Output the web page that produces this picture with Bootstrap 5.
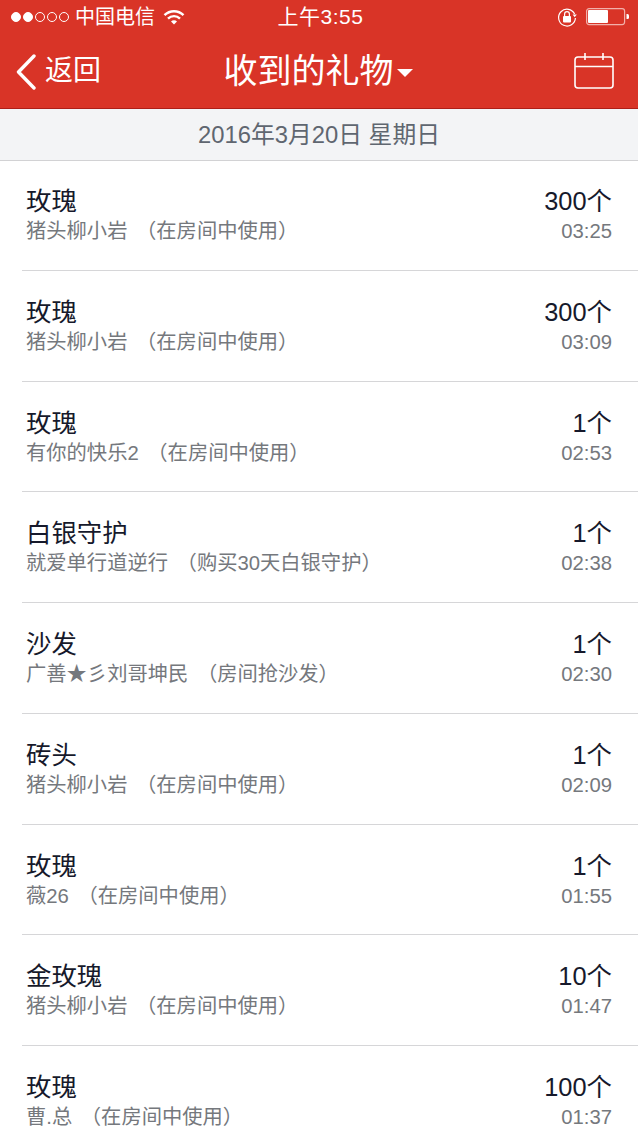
<!DOCTYPE html>
<html lang="zh-CN">
<head>
    <meta charset="UTF-8">
    <meta name="viewport" content="width=device-width, initial-scale=1.0">
    <title>收到的礼物</title>
    <link rel="stylesheet" href="https://cdn.jsdelivr.net/npm/bootstrap@5.3.0/dist/css/bootstrap.min.css">
    <style>
        body {
            background-color: #fff;
            font-family: "Liberation Sans", "Noto Sans CJK SC", sans-serif;
            overflow: hidden;
        }
        .app-head {
            background-color: #d93427;
            color: #fff;
            border-bottom: 1px solid #ad1f18;
            height: 109px;
        }
        .status-line {
            height: 34px;
            padding: 0 8px 0 11px;
            font-size: 20px;
        }
        .status-side {
            width: 200px;
        }
        .signal-dot {
            width: 10px;
            height: 10px;
            border: 1px solid #fff;
            border-radius: 50%;
            margin-right: 2px;
        }
        .signal-dot.on {
            background-color: #fff;
        }
        .status-clock {
            font-size: 21px;
            letter-spacing: .5px;
        }
        .title-line {
            height: 74px;
            padding: 0 24px 0 16px;
        }
        .title-left {
            width: 126px;
        }
        .title-right {
            width: 120px;
        }
        .back-text {
            font-size: 28px;
            line-height: 1;
        }
        .page-title {
            font-size: 34px;
            line-height: 1;
        }
        .title-arrow {
            border-left: 8px solid transparent;
            border-right: 8px solid transparent;
            border-top: 8px solid #fff;
            margin-left: 3px;
            margin-top: 3px;
        }
        .date-strip {
            height: 52px;
            margin-bottom: -1px;
            background-color: #f3f4f6;
            border-bottom: 1px solid #d2d2d4;
            color: #5f6670;
            font-size: 23.8px;
        }
        .gift-row {
            height: 110.75px;
            margin-left: 22px;
            padding: 23px 26px 0 4px;
            border-bottom: 1px solid #d6d6d8;
        }
        .gift-name, .gift-count {
            font-size: 25.4px;
            line-height: 36px;
            color: #16192b;
        }
        .gift-from {
            font-size: 20.3px;
            line-height: 25px;
            word-spacing: 3px;
            color: #75787d;
        }
        .gift-time {
            font-size: 20.3px;
            line-height: 25px;
            color: #75787d;
        }
    </style>
</head>
<body>

    <!-- Red header -->
    <div class="app-head">
        <div class="status-line d-flex align-items-center justify-content-between">
            <div class="status-side d-flex align-items-center">
                <span class="signal-dot on"></span><span class="signal-dot on"></span><span class="signal-dot"></span><span class="signal-dot"></span><span class="signal-dot"></span>
                <span class="ms-1">中国电信</span>
                <svg class="ms-2" width="22" height="16" viewBox="0 0 22 16" fill="none" stroke="#fff" stroke-width="2.4">
                    <path d="M1.5 6.2a13.5 13.5 0 0 1 19 0"/>
                    <path d="M5 9.6a8.6 8.6 0 0 1 12 0"/>
                    <path d="M11 15.5l-3-3a4.2 4.2 0 0 1 6 0z" fill="#fff" stroke="none"/>
                </svg>
            </div>
            <div class="status-clock">上午3:55</div>
            <div class="status-side d-flex align-items-center justify-content-end">
                <svg width="22" height="22" viewBox="0 0 22 22" fill="none" stroke="#fff" stroke-width="1.2">
                    <path d="M18.6 8A8.4 8.4 0 1 0 19.4 12"/>
                    <path d="M16.6 8.6h4.2l-2.1 2.6z" fill="#fff" stroke="none"/>
                    <rect x="7" y="10" width="8" height="6.5" rx="1" fill="#fff" stroke="none"/>
                    <path d="M8.6 10V8a2.4 2.4 0 0 1 4.8 0v2"/>
                </svg>
                <svg class="ms-2" width="44" height="18" viewBox="0 0 44 18">
                    <rect x=".6" y=".6" width="38" height="16" rx="2.5" fill="none" stroke="#f2b0aa" stroke-width="1.2"/>
                    <rect x="2" y="2" width="20" height="13" rx="1" fill="#fff"/>
                    <path d="M40.5 6h1a1.5 1.5 0 0 1 1.5 1.5v2a1.5 1.5 0 0 1-1.5 1.5h-1z" fill="#fff"/>
                </svg>
            </div>
        </div>
        <div class="title-line d-flex align-items-center justify-content-between">
            <div class="title-left d-flex align-items-center">
                <svg width="21" height="38" viewBox="0 0 21 38" fill="none" stroke="#fff" stroke-width="3.4" stroke-linecap="round" stroke-linejoin="round">
                    <path d="M18 4L2.5 20 18 36"/>
                </svg>
                <span class="back-text ms-2">返回</span>
            </div>
            <div class="d-flex align-items-center">
                <span class="page-title">收到的礼物</span>
                <span class="title-arrow"></span>
            </div>
            <div class="title-right d-flex justify-content-end">
                <svg width="40" height="36" viewBox="0 0 40 36" fill="none" stroke="#fff" stroke-width="1.6">
                    <rect x="1" y="4" width="38" height="31" rx="3"/>
                    <path d="M1 13.5h38M11 0v7M29 0v7"/>
                </svg>
            </div>
        </div>
    </div>

    <!-- Date -->
    <div class="date-strip d-flex align-items-center justify-content-center">2016年3月20日 星期日</div>

    <!-- Gift list -->
    <div id="giftList"></div>

    <script>
        const gifts = [
            { name: "玫瑰", from: "猪头柳小岩 （在房间中使用）", count: "300个", time: "03:25" },
            { name: "玫瑰", from: "猪头柳小岩 （在房间中使用）", count: "300个", time: "03:09" },
            { name: "玫瑰", from: "有你的快乐2 （在房间中使用）", count: "1个", time: "02:53" },
            { name: "白银守护", from: "就爱单行道逆行 （购买30天白银守护）", count: "1个", time: "02:38" },
            { name: "沙发", from: "广善★彡刘哥坤民 （房间抢沙发）", count: "1个", time: "02:30" },
            { name: "砖头", from: "猪头柳小岩 （在房间中使用）", count: "1个", time: "02:09" },
            { name: "玫瑰", from: "薇26 （在房间中使用）", count: "1个", time: "01:55" },
            { name: "金玫瑰", from: "猪头柳小岩 （在房间中使用）", count: "10个", time: "01:47" },
            { name: "玫瑰", from: "曹.总 （在房间中使用）", count: "100个", time: "01:37" }
        ];

        document.getElementById("giftList").innerHTML = gifts.map(gift => `
            <div class="gift-row d-flex justify-content-between">
                <div>
                    <div class="gift-name">${gift.name}</div>
                    <div class="gift-from">${gift.from}</div>
                </div>
                <div class="text-end">
                    <div class="gift-count">${gift.count}</div>
                    <div class="gift-time">${gift.time}</div>
                </div>
            </div>
        `).join("");
    </script>

    <script src="https://cdn.jsdelivr.net/npm/bootstrap@5.3.0/dist/js/bootstrap.bundle.min.js"></script>
</body>
</html>
